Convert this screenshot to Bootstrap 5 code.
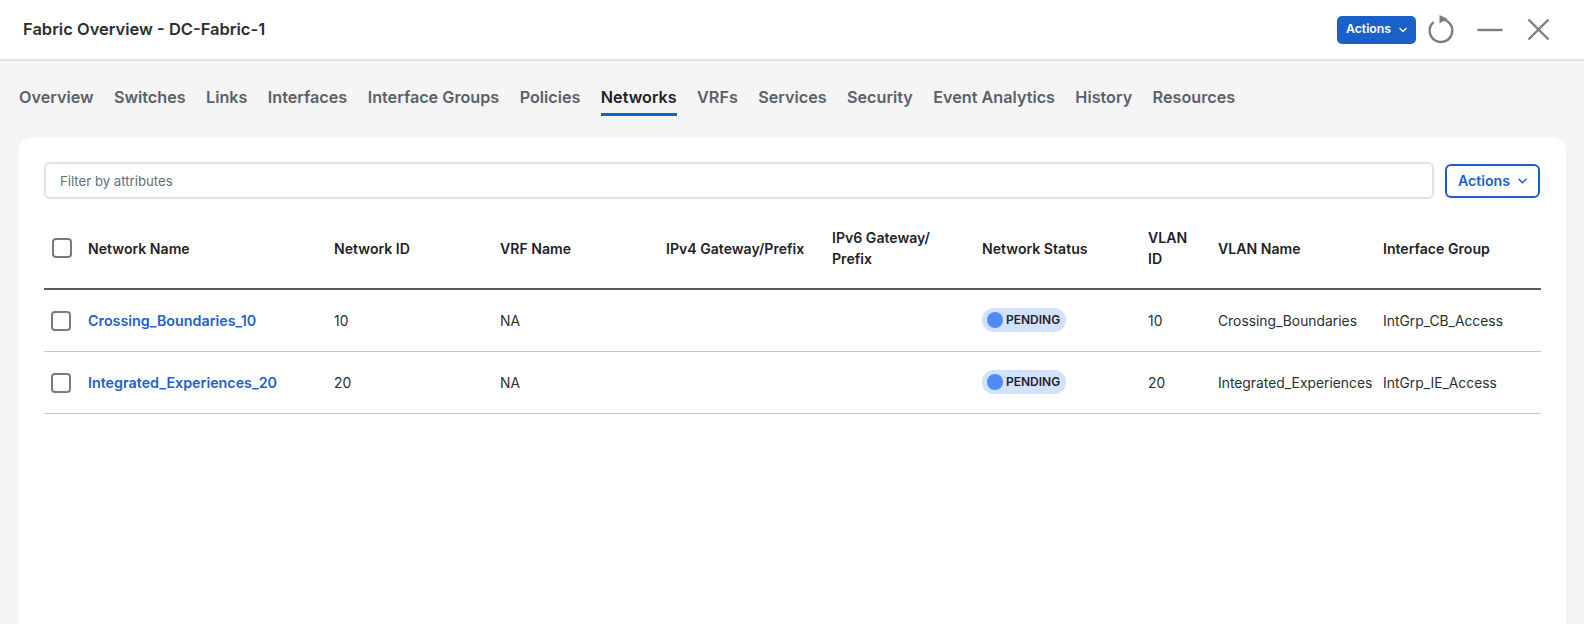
<!DOCTYPE html>
<html lang="en">
<head>
  <meta charset="UTF-8" />
  <meta name="viewport" content="width=device-width, initial-scale=1.0" />
  <title>Fabric Overview - DC-Fabric-1</title>
  <link rel="stylesheet" href="https://cdn.jsdelivr.net/npm/bootstrap@5.3.3/dist/css/bootstrap.min.css" />
  <style>
    html, body { height: 100%; overflow: hidden; }
    body { background-color: #f5f5f6; font-family: Inter, "Liberation Sans", sans-serif; color: #1f2226; display: flex; flex-direction: column; }
    .top-bar { height: 61px; background: #fff; border-bottom: 2px solid #e0e1e3; padding: 0 34px 0 23px; flex: none; }
    .top-title { font-size: 16.5px; font-weight: 600; color: #2b2f33; margin: 0; }
    .btn-act-solid { background: #1b5fc9; color: #fff; border: 0; border-radius: 5px; width: 79px; height: 28px; font-size: 12.3px; font-weight: 600; padding: 0; }
    .btn-act-line { background: #fff; color: #1b5fc9; border: 2px solid #1b5fc9; border-radius: 6px; width: 95px; height: 34px; font-size: 14.2px; font-weight: 600; padding: 0; flex: none; }
    .btn-act-solid:hover { background: #1b5fc9; color: #fff; }
    .btn-act-line:hover { background: #fff; color: #1b5fc9; }
    .fab-tabs { padding: 0 0 0 19px; gap: 20.4px; height: 76px; flex: none; }
    .fab-tabs .nav-link { font-size: 16.2px; font-weight: 600; color: #59616b; padding: 24px 0 7px; border-bottom: 3px solid transparent; height: 55px; }
    .fab-tabs .nav-link.active { color: #1f2226; border-bottom-color: #0a62d6; }
    .main-panel { background: #fff; margin: 0 18px 0 19px; border-radius: 14px 14px 0 0; padding: 25px 25px 0 25px; flex: 1; }
    .filter-row { gap: 11px; margin-right: 1px; }
    .filter-box { height: 37px; border: 2px solid #dfe3e7; border-radius: 6px; font-size: 13.2px; padding: 0 14px; color: #5f6770; }
    .filter-box::placeholder { color: #666e77; }
    .net-table { table-layout: fixed; margin: 0; width: 100%; font-size: 14.1px; }
    .net-table th { font-weight: 600; padding: 9px 16px 0 0; height: 90px; vertical-align: middle; border-bottom: 2px solid #545c68; color: #1f2226; line-height: 21px; }
    .net-table td { padding: 2px 0 0; height: 62px; vertical-align: middle; border-bottom: 1px solid #c4c7cb; color: #2b2f33; white-space: nowrap; font-size: 13.85px; }
    .net-table a { color: #1f5fd0; font-weight: 600; font-size: 14.3px; text-decoration: none; }
    .tick-box { width: 20px; height: 20px; border: 2px solid #747c86; border-radius: 4px; display: block; margin: 0; background: #fff; appearance: none; }
    .state-pill { display: inline-flex; align-items: center; gap: 3px; background: #d2e1fd; border-radius: 12px; height: 24px; padding: 0 6px 0 5px; font-size: 12px; font-weight: 600; color: #1f2226; }
    .state-dot { width: 16px; height: 16px; border-radius: 50%; background: #5289f2; }
  </style>
</head>
<body>
  <header class="top-bar d-flex align-items-center justify-content-between">
    <h1 class="top-title">Fabric Overview - DC-Fabric-1</h1>
    <div class="d-flex align-items-center">
      <button class="btn btn-act-solid d-flex align-items-center justify-content-center gap-2" type="button">Actions
        <svg width="8" height="6" viewBox="0 0 8 6" fill="none" stroke="#fff" stroke-width="1.4" stroke-linecap="round" stroke-linejoin="round"><path d="M1 1.5 4 4.5 7 1.5"/></svg>
      </button>
      <svg width="28" height="30" viewBox="0 0 28 30" fill="none" style="margin:0 22px 0 11px">
        <path d="M14 4.4A11.3 11.3 0 1 1 6 7.7" stroke="#7d7d7d" stroke-width="2.4" stroke-linecap="round"/>
        <path d="M12.5 0V8.2L20.7 4.1Z" fill="#7d7d7d"/>
      </svg>
      <svg width="26" height="4" viewBox="0 0 26 4" style="margin-right:24px"><path d="M0.5 2H25.5" stroke="#7d7d7d" stroke-width="2.4"/></svg>
      <svg width="23" height="23" viewBox="0 0 23 23"><path d="M1.5 1.5 21.5 21.5M21.5 1.5 1.5 21.5" stroke="#7d7d7d" stroke-width="2.4"/></svg>
    </div>
  </header>

  <nav class="nav fab-tabs">
    <a class="nav-link" href="#">Overview</a>
    <a class="nav-link" href="#">Switches</a>
    <a class="nav-link" href="#">Links</a>
    <a class="nav-link" href="#">Interfaces</a>
    <a class="nav-link" href="#">Interface Groups</a>
    <a class="nav-link" href="#">Policies</a>
    <a class="nav-link active" href="#">Networks</a>
    <a class="nav-link" href="#">VRFs</a>
    <a class="nav-link" href="#">Services</a>
    <a class="nav-link" href="#">Security</a>
    <a class="nav-link" href="#">Event Analytics</a>
    <a class="nav-link" href="#">History</a>
    <a class="nav-link" href="#">Resources</a>
  </nav>

  <main class="main-panel">
    <div class="d-flex align-items-center filter-row">
      <input class="form-control filter-box" type="text" placeholder="Filter by attributes" />
      <button class="btn btn-act-line d-flex align-items-center justify-content-center gap-2" type="button">Actions
        <svg width="9" height="6" viewBox="0 0 9 6" fill="none" stroke="#1b5fc9" stroke-width="1.5" stroke-linecap="round" stroke-linejoin="round"><path d="M1 1.2 4.5 4.7 8 1.2"/></svg>
      </button>
    </div>
    <table class="table net-table">
      <colgroup>
        <col style="width:44px" /><col style="width:246px" /><col style="width:166px" /><col style="width:166px" /><col style="width:166px" /><col style="width:150px" /><col style="width:166px" /><col style="width:70px" /><col style="width:165px" /><col />
      </colgroup>
      <thead>
        <tr>
          <th><input class="tick-box" type="checkbox" style="margin-left:8px" /></th>
          <th>Network Name</th>
          <th>Network ID</th>
          <th>VRF Name</th>
          <th>IPv4 Gateway/Prefix</th>
          <th>IPv6 Gateway/ Prefix</th>
          <th>Network Status</th>
          <th>VLAN ID</th>
          <th>VLAN Name</th>
          <th>Interface Group</th>
        </tr>
      </thead>
      <tbody>
        <tr>
          <td><input class="tick-box" type="checkbox" style="margin-left:7px" /></td>
          <td><a href="#">Crossing_Boundaries_10</a></td>
          <td>10</td>
          <td>NA</td>
          <td></td>
          <td></td>
          <td><span class="state-pill"><span class="state-dot"></span>PENDING</span></td>
          <td>10</td>
          <td>Crossing_Boundaries</td>
          <td>IntGrp_CB_Access</td>
        </tr>
        <tr>
          <td><input class="tick-box" type="checkbox" style="margin-left:7px" /></td>
          <td><a href="#">Integrated_Experiences_20</a></td>
          <td>20</td>
          <td>NA</td>
          <td></td>
          <td></td>
          <td><span class="state-pill"><span class="state-dot"></span>PENDING</span></td>
          <td>20</td>
          <td>Integrated_Experiences</td>
          <td>IntGrp_IE_Access</td>
        </tr>
      </tbody>
    </table>
  </main>

  <script src="https://cdn.jsdelivr.net/npm/bootstrap@5.3.3/dist/js/bootstrap.bundle.min.js"></script>
</body>
</html>
